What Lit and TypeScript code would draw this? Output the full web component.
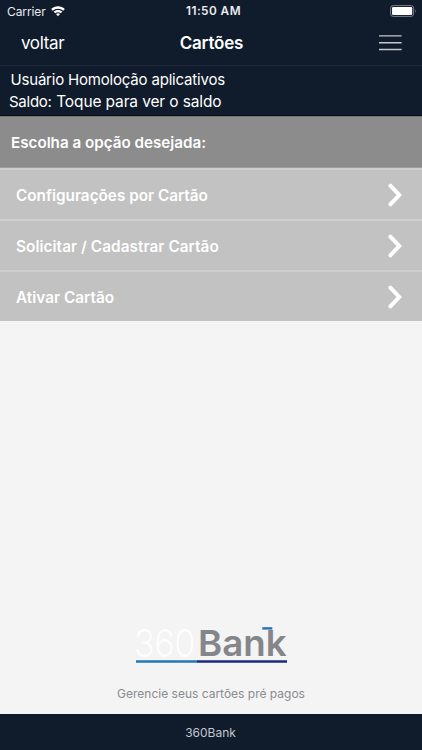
import { LitElement, html, css, svg } from "lit";
import { customElement } from "lit/decorators.js";

const OPTIONS = [
  { label: "Configurações por Cartão", cls: "config" },
  { label: "Solicitar / Cadastrar Cartão", cls: "request" },
  { label: "Ativar Cartão", cls: "activate" },
];

const wifi = svg`
  <path d="M0.7 4.1C4.5 0.4 10.5 0.4 14.3 4.1L12.8 5.7C9.9 3 5.1 3 2.2 5.7Z"/>
  <path d="M3.1 6.6C5.6 4.4 9.4 4.4 11.9 6.6L10.3 8.2C8.7 6.8 6.3 6.8 4.7 8.2Z"/>
  <path d="M5.5 9C6.7 8 8.3 8 9.5 9L7.5 11.2Z"/>`;

@customElement("app-root")
export class AppRoot extends LitElement {
  static styles = css`
    :host {
      display: flex;
      flex-direction: column;
      height: 750px;
      width: 100%;
      overflow: hidden;
      background: #f4f4f4;
      color: #fff;
      font-family: Inter, "Liberation Sans", sans-serif;
    }
    * { box-sizing: border-box; }
    svg { display: block; }
    .status {
      display: grid;
      grid-template-columns: 1fr auto 1fr;
      align-items: center;
      height: 22px;
      padding: 0 5px 0 7px;
      background: #101b2b;
      color: #e9ecef;
      font-size: 12px;
    }
    .carrier { display: flex; align-items: center; gap: 4px; }
    .carrier span { letter-spacing: -0.1px; }
    .carrier svg, .battery { margin-bottom: 1px; }
    .time { padding-left: 3px; font-weight: 600; font-size: 11.8px; letter-spacing: 0.45px; }
    .battery { justify-self: end; }
    .nav {
      display: grid;
      grid-template-columns: 1fr auto 1fr;
      align-items: center;
      height: 44px;
      padding: 0 20px 1px 21px;
      background: #101b2b;
      border-bottom: 1px solid #1c2838;
    }
    .back { font-size: 17px; letter-spacing: -0.35px; }
    .title { margin: 0; font-size: 17px; font-weight: 600; letter-spacing: -0.2px; }
    .menu { justify-self: end; }
    .account {
      height: 50px;
      padding: 3px 9px 0;
      background: #101b2b;
      border-bottom: 1px solid #050d19;
      font-size: 15px;
      line-height: 22px;
    }
    .user { padding-left: 1.5px; letter-spacing: -0.19px; }
    .balance { display: flex; gap: 4.5px; }
    .label { letter-spacing: -0.25px; }
    .tap { font-size: 15.5px; letter-spacing: -0.13px; }
    .prompt {
      display: flex;
      align-items: center;
      height: 52px;
      padding: 0 11px;
      background: #8c8c8c;
      border-top: 1px solid #777;
      border-bottom: 1px solid #a0a0a0;
      font-size: 15.2px;
      font-weight: 600;
    }
    .list { display: flex; flex-direction: column; gap: 2px; padding-top: 2px; background: #cfcfcf; }
    .row {
      display: flex;
      align-items: center;
      justify-content: space-between;
      height: 49px;
      padding: 0 19px 0 16px;
      background: #c2c2c2;
      font-size: 15.3px;
      font-weight: 600;
    }
    .row span { padding-top: 1px; }
    .request { letter-spacing: 0.07px; }
    .activate { letter-spacing: 0.03px; }
    .brand {
      display: flex;
      flex: 1;
      flex-direction: column;
      align-items: center;
      justify-content: flex-end;
      padding-bottom: 11px;
    }
    .logo { overflow: visible; }
    .tagline {
      margin: 19px 0 0;
      color: #8b8b90;
      font-size: 12px;
      line-height: 18px;
    }
    .light { font: 200 36px Inter, sans-serif; }
    .bold { font: 600 36px Inter, sans-serif; }
    .foot {
      display: flex;
      align-items: center;
      justify-content: center;
      height: 36px;
      background: #101b2b;
      color: #c3c8cf;
      font-size: 12px;
    }
    .foot span { padding-right: 1px; }
  `;

  render() {
    return html`
      <div class="status">
        <div class="carrier">
          <span>Carrier</span>
          <svg width="16" height="12" viewBox="0 0 15 12" fill="#fff">${wifi}</svg>
        </div>
        <div class="time">11:50 AM</div>
        <svg class="battery" width="27" height="12" viewBox="0 0 27 12">
          <rect x="0.6" y="0.6" width="23" height="10.8" rx="2.5" fill="none" stroke="#777f89"/>
          <rect x="2" y="2" width="20.2" height="8" rx="1.2" fill="#fff"/>
          <path d="M25 4.1Q26.5 6 25 7.9Z" fill="#777f89"/>
        </svg>
      </div>
      <header class="nav">
        <div class="back">voltar</div>
        <h1 class="title">Cartões</h1>
        <svg class="menu" width="24" height="16" viewBox="0 0 24 16">
          <path d="M1 0.9H23.6M1 7.7H23.6M1 14.5H23.6" stroke="#c4c8cd" stroke-width="1.4"/>
        </svg>
      </header>
      <section class="account">
        <div class="user">Usuário Homoloção aplicativos</div>
        <div class="balance"><span class="label">Saldo:</span><span class="tap">Toque para ver o saldo</span></div>
      </section>
      <div class="prompt"><span>Escolha a opção desejada:</span></div>
      <nav class="list">
        ${OPTIONS.map((o) => html`
          <div class="row">
            <span class=${o.cls}>${o.label}</span>
            <svg width="16" height="24" viewBox="0 0 16 24">
              <path d="M3.4 2.7L12.2 12L3.4 21.3" fill="none" stroke="#fff" stroke-width="4" stroke-linecap="round"/>
            </svg>
          </div>`)}
      </nav>
      <section class="brand">
        <svg class="logo" width="152" height="40" viewBox="0 0 152 40">
          <text class="light" x="-0.8" y="29.7" textLength="61" lengthAdjust="spacingAndGlyphs" fill="#fff" stroke="#fff" stroke-width="0.3">360</text>
          <text class="bold" x="63" y="29.7" textLength="88.6" lengthAdjust="spacingAndGlyphs" fill="#85868a">Bank</text>
          <path d="M127.3 2.4H137.3" stroke="#2374b5" stroke-width="2.4"/>
          <path d="M1 35.5H62" stroke="#2178bd" stroke-width="2.4"/>
          <path d="M62 35.5H152" stroke="#1c2c7b" stroke-width="2.4"/>
        </svg>
        <p class="tagline">Gerencie seus cartões pré pagos</p>
      </section>
      <footer class="foot"><span>360Bank</span></footer>
    `;
  }
}
